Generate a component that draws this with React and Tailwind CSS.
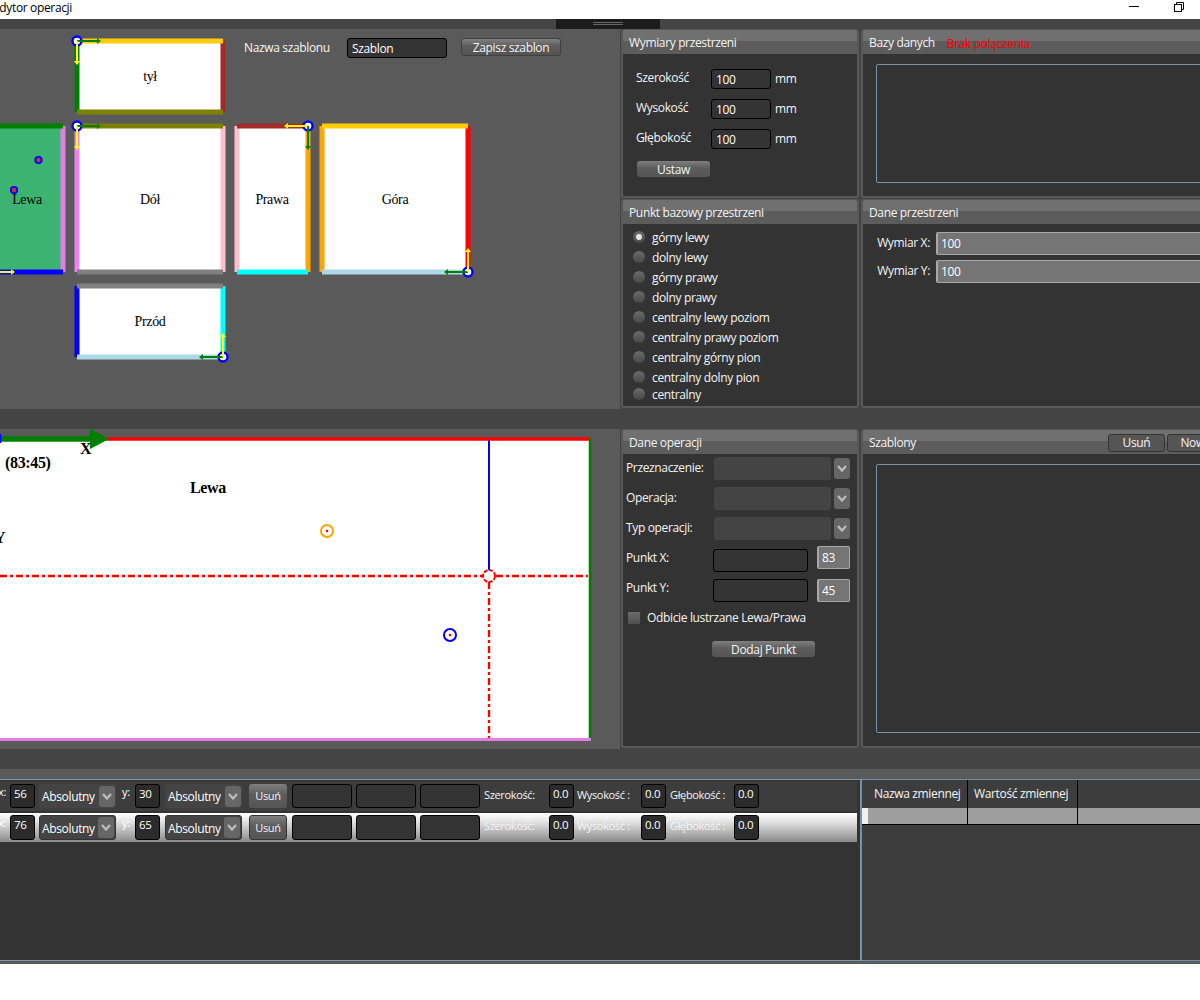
const UI_FONT = "font-['Open_Sans','Noto_Sans',sans-serif]"

const FACES = [
  {
    name: 'tył', labelX: 150, labelY: 81,
    fill: '#ffffff', x1: 77, x2: 223, y1: 41, y2: 112,
    top: '#ffcc00', left: '#008000', right: '#a52a2a', bottom: '#808000',
  },
  {
    name: 'Dół', labelX: 150, labelY: 204,
    fill: '#ffffff', x1: 77, x2: 223, y1: 126, y2: 272,
    top: '#808000', left: '#ee82ee', right: '#ffc0cb', bottom: '#808080',
  },
  {
    name: 'Lewa', labelX: 27, labelY: 204,
    fill: '#3cb371', x1: -80, x2: 63, y1: 126, y2: 272,
    top: '#008000', left: '#3cb371', right: '#e47de4', bottom: '#0000ff',
  },
  {
    name: 'Prawa', labelX: 272, labelY: 204,
    fill: '#ffffff', x1: 237, x2: 308, y1: 126, y2: 272,
    top: '#a52a2a', left: '#ffc0cb', right: '#ffa500', bottom: '#00ffff',
  },
  {
    name: 'Góra', labelX: 395, labelY: 204,
    fill: '#ffffff', x1: 322, x2: 468, y1: 126, y2: 272,
    top: '#ffcc00', left: '#ffa500', right: '#ff0000', bottom: '#add8e6',
  },
  {
    name: 'Przód', labelX: 150, labelY: 326,
    fill: '#ffffff', x1: 77, x2: 223, y1: 286, y2: 357,
    top: '#808080', left: '#0000ff', right: '#00ffff', bottom: '#add8e6',
  },
]

// corner marker: circle plus two axis arrows
const MARKERS = [
  { x: 77, y: 41, hx: 24, vy: 24, hc: '#008000', vc: '#ffff00' },
  { x: 77, y: 126, hx: 24, vy: 24, hc: '#008000', vc: '#ffff00' },
  { x: 308, y: 126, hx: -24, vy: 24, hc: '#ffff00', vc: '#008000' },
  { x: 468, y: 272, hx: -24, vy: -24, hc: '#008000', vc: '#ffff00' },
  { x: 223, y: 357, hx: -24, vy: -24, hc: '#008000', vc: '#ffff00' },
]

function Marker({ x, y, hx, vy, hc, vc }) {
  const sx = Math.sign(hx)
  const sy = Math.sign(vy)
  return (
    <g>
      <circle cx={x} cy={y} r="4.5" fill="#fff" stroke="#0000ff" strokeWidth="2.4" />
      <line x1={x} y1={y} x2={x + hx - 3 * sx} y2={y} stroke={hc} strokeWidth="2" />
      <polygon points={`${x + hx},${y} ${x + hx - 4 * sx},${y - 3} ${x + hx - 4 * sx},${y + 3}`} fill={hc} />
      <line x1={x} y1={y} x2={x} y2={y + vy - 3 * sy} stroke={vc} strokeWidth="2" />
      <polygon points={`${x},${y + vy} ${x - 3},${y + vy - 4 * sy} ${x + 3},${y + vy - 4 * sy}`} fill={vc} />
    </g>
  )
}

function FacesDrawing() {
  return (
    <svg className="absolute inset-0" width="620" height="380" viewBox="0 29 620 380">
      {FACES.map((f) => (
        <g key={f.name}>
          <rect x={f.x1} y={f.y1} width={f.x2 - f.x1} height={f.y2 - f.y1} fill={f.fill} />
          <line x1={f.x1} y1={f.y1} x2={f.x1} y2={f.y2} stroke={f.left} strokeWidth="5" />
          <line x1={f.x2} y1={f.y1} x2={f.x2} y2={f.y2} stroke={f.right} strokeWidth="5" />
          <line x1={f.x1} y1={f.y1} x2={f.x2} y2={f.y1} stroke={f.top} strokeWidth="5" />
          <line x1={f.x1} y1={f.y2} x2={f.x2} y2={f.y2} stroke={f.bottom} strokeWidth="5" />
          <text
            x={f.labelX}
            y={f.labelY}
            textAnchor="middle"
            fontFamily="'Liberation Serif', serif"
            fontSize="14"
            fill="#000"
          >
            {f.name}
          </text>
        </g>
      ))}
      <line x1="0" y1="272" x2="12" y2="272" stroke="#ffff00" strokeWidth="2" />
      <polygon points="15,272 11,269 11,275" fill="#ffff00" />
      <circle cx="38.5" cy="160" r="3.2" fill="#d03030" stroke="#0000ff" strokeWidth="1.8" />
      <circle cx="14" cy="190" r="3.2" fill="#d03030" stroke="#0000ff" strokeWidth="1.8" />
      {MARKERS.map((m) => (
        <Marker key={`${m.x}-${m.y}`} {...m} />
      ))}
    </svg>
  )
}

function OperationDrawing() {
  const serif = "'Liberation Serif', serif"
  return (
    <svg className="absolute inset-0" width="620" height="320" viewBox="0 429 620 320">
      <rect x="-10" y="439" width="599" height="300" fill="#fff" />
      <line x1="-10" y1="439" x2="590" y2="439" stroke="#ff0000" strokeWidth="3.5" />
      <line x1="590" y1="438" x2="590" y2="741" stroke="#008000" strokeWidth="2.5" />
      <line x1="-10" y1="739.5" x2="591" y2="739.5" stroke="#e47de4" strokeWidth="3" />
      <line x1="489" y1="440" x2="489" y2="570" stroke="#0000ff" strokeWidth="2" />
      <line x1="0" y1="576" x2="588" y2="576" stroke="#ff0000" strokeWidth="2.4" strokeDasharray="7 3 3 3" />
      <line x1="489" y1="582" x2="489" y2="738" stroke="#ff0000" strokeWidth="2.4" strokeDasharray="7 3 3 3" />
      <circle cx="489" cy="576" r="6" fill="#fff" stroke="#ff0000" strokeWidth="2" strokeDasharray="4 1.5" />
      <line x1="-5" y1="439" x2="91" y2="439" stroke="#008000" strokeWidth="5.5" />
      <polygon points="109,439 90,429 90,449" fill="#008000" />
      <line x1="0.5" y1="434" x2="0.5" y2="443" stroke="#0000ff" strokeWidth="1.5" />
      <circle cx="327" cy="531" r="6" fill="#fff" stroke="#ffa500" strokeWidth="2" />
      <circle cx="327" cy="531" r="1.3" fill="#ff0000" />
      <circle cx="450" cy="635" r="6" fill="#fff" stroke="#0000ff" strokeWidth="2" />
      <circle cx="450" cy="635" r="1.3" fill="#ff0000" />
      <g fontFamily={serif} fontWeight="700" fill="#000" fontSize="16">
        <text x="80" y="454">X</text>
        <text x="5" y="468">(83:45)</text>
        <text x="190" y="493">Lewa</text>
        <text x="-6" y="543">Y</text>
      </g>
    </svg>
  )
}

function Chevron({ className }) {
  return (
    <div className={`flex items-center justify-center rounded-[3px] bg-[#666666] ${className}`}>
      <svg width="10" height="7" viewBox="0 0 10 7">
        <polyline points="1,1 5,5.5 9,1" fill="none" stroke="#bdbdbd" strokeWidth="2.2" />
      </svg>
    </div>
  )
}

function Panel({ title, titleExtra, className, children }) {
  return (
    <div className={`flex shrink-0 flex-col overflow-hidden rounded-[3px] border-2 border-t border-[#585858] bg-[#333333] ${className}`}>
      <div className="flex h-6 shrink-0 items-center bg-[linear-gradient(#707070_45%,#5c5c5c_45%)] pl-[6px] pt-[2px] text-[12px] text-[#f5f5f5]">
        <span>{title}</span>
        {titleExtra}
      </div>
      {children}
    </div>
  )
}

function DarkInput({ className, children }) {
  return (
    <div className={`flex items-center rounded-[3px] border border-black bg-[#333333] pl-1 pt-[1px] text-[12px] text-white ${className}`}>
      {children}
    </div>
  )
}

function GrayBox({ className, children }) {
  return (
    <div className={`flex items-center rounded-[2px] border border-l-2 border-[#a8a8a8] bg-[#757575] pl-[3px] text-[12px] text-white ${className}`}>
      {children}
    </div>
  )
}

function GradientButton({ className, children }) {
  return (
    <div className={`flex items-center justify-center rounded-[3px] bg-[linear-gradient(#808080,#5c5c5c_45%,#555555)] pt-[1px] text-[12px] text-[#f5f5f5] ${className}`}>
      {children}
    </div>
  )
}

const DIMENSIONS = ['Szerokość', 'Wysokość', 'Głębokość']

const BASE_POINTS = [
  'górny lewy',
  'dolny lewy',
  'górny prawy',
  'dolny prawy',
  'centralny lewy poziom',
  'centralny prawy poziom',
  'centralny górny pion',
  'centralny dolny pion',
  'centralny',
]

function Radio({ checked }) {
  return (
    <div className="flex h-3 w-3 shrink-0 items-center justify-center rounded-full bg-[linear-gradient(#6c6c6c,#484848)]">
      {checked && <div className="h-[6px] w-[6px] rounded-full bg-[#e4e4e4]" />}
    </div>
  )
}

function FieldBox({ children }) {
  return (
    <div className="h-full w-[25px] shrink-0 rounded-[3px] border border-black bg-[#2b2b2b] pl-[3px] pt-[1px] text-[11.5px] leading-[15px] text-white">
      {children}
    </div>
  )
}

function RowCombo({ selected }) {
  return (
    <div className={`flex h-full w-[77px] shrink-0 items-center justify-between rounded-[3px] bg-[#444444] pr-[1px] ${selected ? 'border border-[#333333] pl-[2px]' : 'pl-[3px]'}`}>
      <span className="w-[53px] overflow-hidden whitespace-nowrap pt-[2px] text-[12px] text-white">Absolutny</span>
      <Chevron className="h-[21px] w-[16px]" />
    </div>
  )
}

function RowLabel({ width, children }) {
  return (
    <div className={`shrink-0 whitespace-nowrap pb-[2px] text-[11px] text-[#f5f5f5] ${width}`}>{children}</div>
  )
}

function OperationRow({ xVal, yVal, selected }) {
  return (
    <div
      className={`flex w-[857px] items-center ${
        selected
          ? 'h-[29px] bg-[linear-gradient(#ffffff,#e8e8e8_25%,#8a8a8a)]'
          : 'h-[30px] bg-[#3d3d3d]'
      }`}
    >
      <div className={`flex items-center ${selected ? 'h-[25px]' : 'h-6'}`}>
        <div className="ml-[-2px] w-3 shrink-0 self-start text-[11px] leading-[15px] text-white">x:</div>
        <FieldBox>{xVal}</FieldBox>
        <div className="w-1 shrink-0" />
        <RowCombo selected={selected} />
        <div className="w-[6px] shrink-0" />
        <div className="w-[13px] shrink-0 self-start text-[11px] leading-[15px] text-white">y:</div>
        <FieldBox>{yVal}</FieldBox>
        <div className="w-[5px] shrink-0" />
        <RowCombo selected={selected} />
        <div className="w-[7px] shrink-0" />
        <GradientButton className={`h-full w-[38px] shrink-0 !text-[11px] ${selected ? 'border border-[#333333]' : ''}`}>Usuń</GradientButton>
        <div className="w-[5px] shrink-0" />
        <div className="flex h-full gap-1">
          <div className="h-full w-[60px] rounded-[3px] border border-black bg-[#333333]" />
          <div className="h-full w-[60px] rounded-[3px] border border-black bg-[#333333]" />
          <div className="h-full w-[60px] rounded-[3px] border border-black bg-[#333333]" />
        </div>
        <div className="w-1 shrink-0" />
        <RowLabel width="w-[65px]">Szerokość:</RowLabel>
        <FieldBox>0.0</FieldBox>
        <div className="w-[3px] shrink-0" />
        <RowLabel width="w-[64px]">Wysokość :</RowLabel>
        <FieldBox>0.0</FieldBox>
        <div className="w-1 shrink-0" />
        <RowLabel width="w-[64px]">Głębokość :</RowLabel>
        <FieldBox>0.0</FieldBox>
      </div>
    </div>
  )
}

export default function App() {
  return (
    <div className={`w-[1200px] overflow-hidden bg-white ${UI_FONT} tracking-[-0.35px]`}>
      {/* Title bar */}
      <div className="flex h-[19px] items-start justify-between bg-white">
        <span className="ml-[-7px] text-[12px] leading-[15px] text-black">Edytor operacji</span>
        <div className="flex items-center gap-[35px] pr-4 pt-[2px]">
          <svg width="10" height="10" viewBox="0 0 10 10">
            <line x1="0" y1="4.5" x2="10" y2="4.5" stroke="#000" />
          </svg>
          <svg width="10" height="10" viewBox="0 0 10 10">
            <rect x="0.5" y="2.5" width="7" height="7" fill="none" stroke="#000" />
            <polyline points="2.5,2.5 2.5,0.5 9.5,0.5 9.5,7.5 7.5,7.5" fill="none" stroke="#000" />
          </svg>
        </div>
      </div>

      {/* Grip */}
      <div className="flex h-[10px] bg-[#444444] pl-[556px]">
        <div className="flex h-full w-[104px] flex-col items-center bg-[#1c1c1c] pt-[3px]">
          <div className="h-[3px] w-[30px] border-y border-[#666666]" />
        </div>
      </div>

      {/* Upper row */}
      <div className="flex h-[380px] bg-[#444444]">
        <div className="relative h-full w-[620px] shrink-0 bg-[#5a5a5a]">
          <FacesDrawing />
          <div className="relative flex items-start pl-[244px] pt-[9px]">
            <span className="w-[103px] pt-[1px] text-[12px] text-[#f5f5f5]">Nazwa szablonu</span>
            <DarkInput className="h-5 w-[100px]">Szablon</DarkInput>
            <GradientButton className="ml-[14px] h-[18px] w-[100px] border border-[#404040]">Zapisz szablon</GradientButton>
          </div>
        </div>
        <div className="flex h-full flex-col gap-[1px] pl-[1px]">
          <Panel title="Wymiary przestrzeni" className="h-[169px] w-[238px]">
            <div className="flex flex-col gap-[10px] pl-[13px] pt-[15px]">
              {DIMENSIONS.map((d) => (
                <div key={d} className="flex h-5 items-center text-[12px] text-[#f5f5f5]">
                  <span className="w-[75px] pb-[2px]">{d}</span>
                  <DarkInput className="h-5 w-[60px]">100</DarkInput>
                  <span className="ml-1 pb-[1px]">mm</span>
                </div>
              ))}
            </div>
            <GradientButton className="ml-[14px] mt-3 h-4 w-[73px]">Ustaw</GradientButton>
          </Panel>
          <Panel title="Punkt bazowy przestrzeni" className="h-[209px] w-[238px]">
            <div className="flex flex-col pl-[10px] pt-[3px]">
              {BASE_POINTS.map((p, i) => (
                <div
                  key={p}
                  className={`flex items-center text-[12px] text-[#f5f5f5] ${i === 8 ? 'h-[14px]' : 'h-5'}`}
                >
                  <Radio checked={i === 0} />
                  <span className="ml-[7px] pt-[1px]">{p}</span>
                </div>
              ))}
            </div>
          </Panel>
        </div>
        <div className="ml-[2px] flex h-full flex-col gap-[1px]">
          <Panel
            title="Bazy danych"
            titleExtra={<span className="ml-3 pt-[1px] text-[12px] text-[#ff0000]">Brak połączenia</span>}
            className="h-[169px] w-[400px]"
          >
            <div className="mx-[13px] mt-[10px] h-[119px] rounded-[2px] border border-[#7d93a6]" />
          </Panel>
          <Panel title="Dane przestrzeni" className="h-[209px] w-[400px]">
            <div className="flex flex-col gap-[5px] pr-3 pt-2">
              {['Wymiar X:', 'Wymiar Y:'].map((l) => (
                <div key={l} className="flex h-[23px] items-center text-[12px] text-[#f5f5f5]">
                  <span className="w-[67px] whitespace-nowrap pb-[2px] text-right">{l}</span>
                  <GrayBox className="ml-[6px] h-full flex-1">100</GrayBox>
                </div>
              ))}
            </div>
          </Panel>
        </div>
      </div>

      <div className="h-5 bg-[#444444]" />

      {/* Lower row */}
      <div className="flex h-[320px] bg-[#444444]">
        <div className="relative h-full w-[620px] shrink-0 bg-[#5a5a5a]">
          <OperationDrawing />
        </div>
        <div className="pl-[1px]">
          <Panel title="Dane operacji" className="h-[319px] w-[238px]">
            <div className="flex flex-col pl-[3px] pt-[3px] text-[12px] text-[#f5f5f5]">
              {['Przeznaczenie:', 'Operacja:', 'Typ operacji:'].map((l) => (
                <div key={l} className="mb-[7px] flex h-[23px] items-center">
                  <span className="w-[88px] pb-[1px]">{l}</span>
                  <div className="h-full w-[117px] rounded-[3px] bg-[#444444]" />
                  <Chevron className="ml-[3px] h-[21px] w-4" />
                </div>
              ))}
              <div className="mt-[-1px] flex h-[26px] items-start">
                <span className="w-[87px] pt-[3px]">Punkt X:</span>
                <DarkInput className="mt-[3px] h-[23px] w-[95px]" />
                <GrayBox className="ml-[9px] h-[23px] w-[33px]">83</GrayBox>
              </div>
              <div className="mt-[7px] flex h-[23px] items-start">
                <span className="w-[87px]">Punkt Y:</span>
                <DarkInput className="h-[23px] w-[95px]" />
                <GrayBox className="ml-[9px] h-[23px] w-[33px]">45</GrayBox>
              </div>
              <div className="mt-[9px] flex h-[13px] items-center">
                <div className="ml-[2px] h-3 w-3 bg-[linear-gradient(#6c6c6c,#505050)]" />
                <span className="ml-[7px]">Odbicie lustrzane Lewa/Prawa</span>
              </div>
              <GradientButton className="ml-[86px] mt-[17px] h-4 w-[103px]">Dodaj Punkt</GradientButton>
            </div>
          </Panel>
        </div>
        <div className="ml-[2px]">
          <Panel
            title="Szablony"
            titleExtra={
              <div className="ml-auto mr-[35px] flex gap-[2px]">
                <div className="flex h-[18px] w-[57px] items-center justify-center rounded-[3px] border border-[#333333] bg-[#555555] text-[12px] text-[#f5f5f5]">Usuń</div>
                <div className="flex h-[18px] w-[57px] items-center justify-center rounded-[3px] border border-[#333333] bg-[#555555] text-[12px] text-[#f5f5f5]">Nowy</div>
              </div>
            }
            className="h-[319px] w-[400px]"
          >
            <div className="ml-[13px] mr-[-60px] mt-[10px] h-[269px] rounded-[2px] border border-[#7d93a6]" />
          </Panel>
        </div>
      </div>

      <div className="h-5 bg-[#444444]" />
      <div className="h-[10px] bg-[#5a5a5a]" />

      {/* Bottom lists */}
      <div className="flex h-[182px] bg-[#5a5a5a]">
        <div className="h-full w-[861px] shrink-0 border-y border-r border-[#7d97ad] bg-[#333333] pt-[1px]">
          <div className="flex flex-col gap-[2px]">
            <OperationRow xVal="56" yVal="30" />
            <OperationRow xVal="76" yVal="65" selected />
          </div>
        </div>
        <div className="h-full w-[400px] shrink-0 border border-[#6f8fb0] bg-[#3d3d3d]">
          <div className="flex h-[28px] pl-[6px] text-[12px] text-[#f5f5f5]">
            <div className="flex w-[100px] items-center border-r border-black pl-[6px]">Nazwa zmiennej</div>
            <div className="flex w-[110px] items-center border-r border-black pl-[6px]">Wartość zmiennej</div>
          </div>
          <div className="flex h-[17px] border-b border-black bg-[#9e9e9e]">
            <div className="w-[6px] bg-[#f0f0f0]" />
            <div className="w-[100px] border-r border-black" />
            <div className="w-[110px] border-r border-black" />
          </div>
        </div>
      </div>

      <div className="h-[3px] bg-[#5a5a5a]" />
      <div className="h-9 bg-white" />
    </div>
  )
}
